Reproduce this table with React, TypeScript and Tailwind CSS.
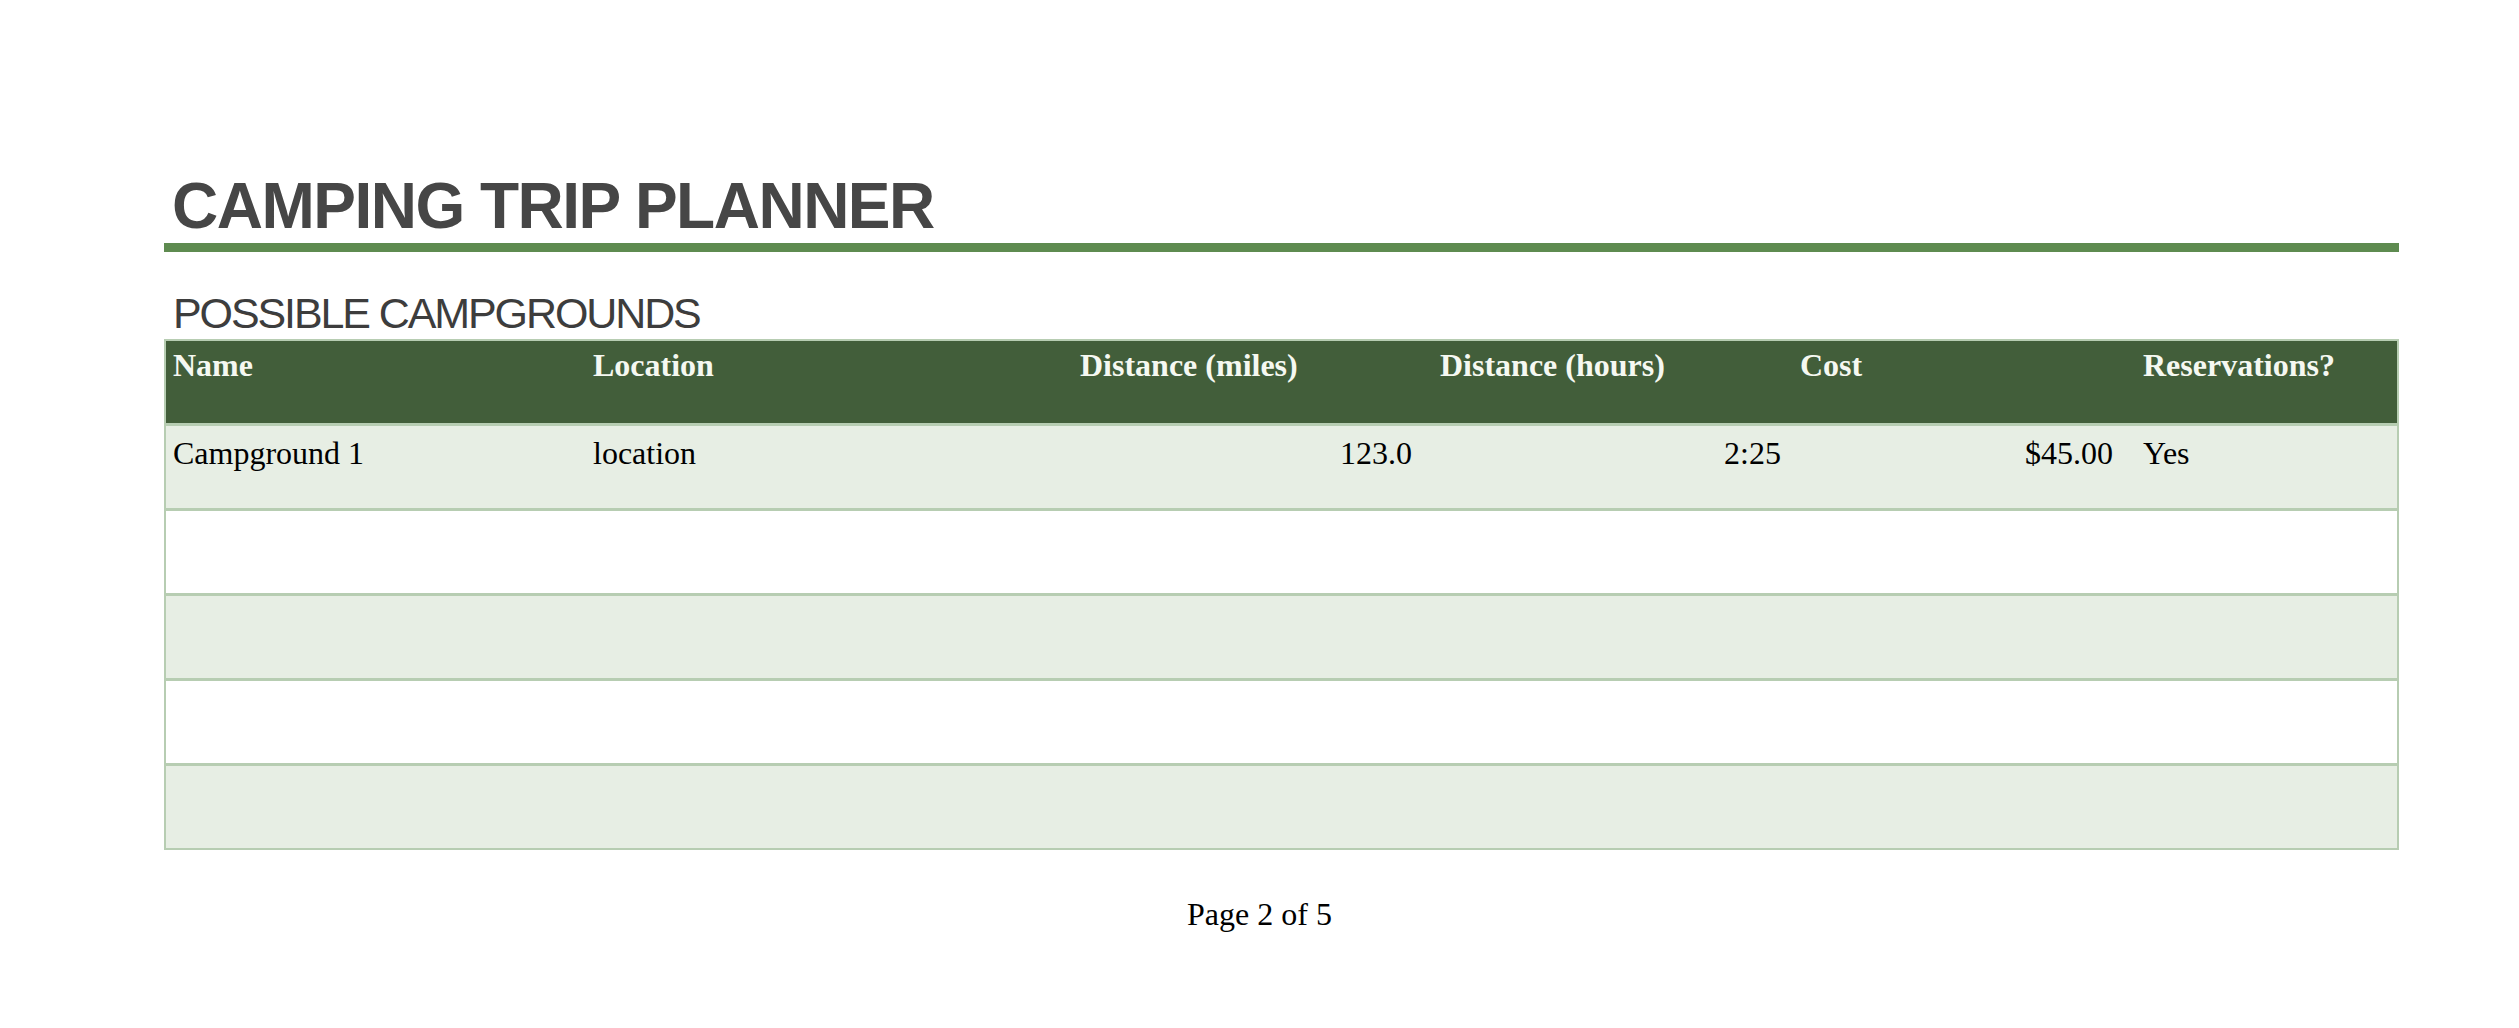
const serif = { fontFamily: '"Liberation Serif", "Times New Roman", serif' };

type Row = {
  name: string;
  location: string;
  miles: string;
  hours: string;
  cost: string;
  reservations: string;
};

const rows: Row[] = [
  { name: "Campground 1", location: "location", miles: "123.0", hours: "2:25", cost: "$45.00", reservations: "Yes" },
  { name: "", location: "", miles: "", hours: "", cost: "", reservations: "" },
  { name: "", location: "", miles: "", hours: "", cost: "", reservations: "" },
  { name: "", location: "", miles: "", hours: "", cost: "", reservations: "" },
  { name: "", location: "", miles: "", hours: "", cost: "", reservations: "" },
];

const cols = "grid grid-cols-[419px_487px_360px_360px_343px_1fr]";

export default function App() {
  return (
    <div className="w-[2519px] h-[1028px] bg-white overflow-hidden">
      <div className="ml-[164px] w-[2235px] pt-[174px]">
        {/* Title */}
        <h1
          className="pl-[8px] text-[64px] leading-[64px] font-bold tracking-[-1.5px] text-[#464646]"
          style={{ fontFamily: '"Liberation Sans", Arial, sans-serif' }}
        >
          CAMPING TRIP PLANNER
        </h1>
        <div className="mt-[5px] h-[9px] bg-[#5e8b50]" />

        {/* Section */}
        <h2
          className="mt-[40px] pl-[9px] text-[43px] leading-[43px] font-normal tracking-[-2.1px] text-[#3d3d3d]"
          style={{ fontFamily: '"Liberation Sans", Arial, sans-serif' }}
        >
          POSSIBLE CAMPGROUNDS
        </h2>

        {/* Table */}
        <div className="mt-[4px] border-2 border-[#b7cdb2]" style={serif}>
          <div className={`${cols} h-[82px] bg-[#425e3a] text-[#f5f8f1] text-[32px] leading-[32px] font-bold`}>
            <div className="pt-[8px] pl-[7px]">Name</div>
            <div className="pt-[8px] pl-[8px]">Location</div>
            <div className="pt-[8px] pl-[8px]">Distance (miles)</div>
            <div className="pt-[8px] pl-[8px]">Distance (hours)</div>
            <div className="pt-[8px] pl-[8px]">Cost</div>
            <div className="pt-[8px] pl-[8px]">Reservations?</div>
          </div>
          {rows.map((r, i) => (
            <div
              key={i}
              className={`${cols} h-[85px] border-t-[3px] border-[#b7cdb2] text-black text-[32px] leading-[32px] ${
                i % 2 === 0 ? "bg-[#e7eee4]" : "bg-white"
              }`}
            >
              <div className="pt-[11px] pl-[7px]">{r.name}</div>
              <div className="pt-[11px] pl-[8px]">{r.location}</div>
              <div className="pt-[11px] pr-[20px] text-right">{r.miles}</div>
              <div className="pt-[11px] pr-[11px] text-right">{r.hours}</div>
              <div className="pt-[11px] pr-[22px] text-right">{r.cost}</div>
              <div className="pt-[11px] pl-[8px]">{r.reservations}</div>
            </div>
          ))}
        </div>
      </div>

      {/* Footer */}
      <div className="mt-[48px] text-center text-[32px] leading-[32px] text-black" style={serif}>
        Page 2 of 5
      </div>
    </div>
  );
}
